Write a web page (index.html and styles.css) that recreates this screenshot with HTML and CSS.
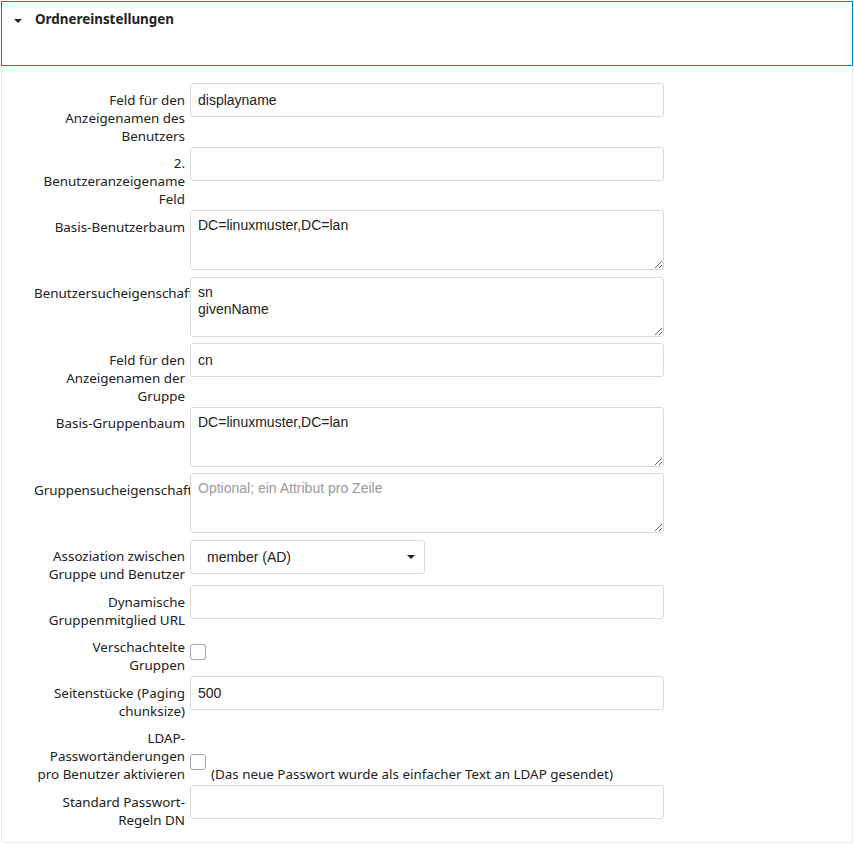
FILE: index.html
```html
<!DOCTYPE html>
<html lang="de">
<head>
<meta charset="utf-8">
<title>Ordnereinstellungen</title>
<link rel="stylesheet" href="styles.css">
</head>
<body>
<div class="wrap">
  <div class="section-head">
    <span class="caret"></span>
    <h3 class="title">Ordnereinstellungen</h3>
  </div>
  <div class="section-body">
    <div class="row">
      <label class="lbl">Feld für den Anzeigenamen des Benutzers</label>
      <input class="field" type="text" value="displayname">
    </div>
    <div class="row">
      <label class="lbl">2. Benutzeranzeigename Feld</label>
      <input class="field" type="text" value="">
    </div>
    <div class="row">
      <label class="lbl">Basis-Benutzerbaum</label>
      <textarea class="field area">DC=linuxmuster,DC=lan</textarea>
    </div>
    <div class="row">
      <label class="lbl">Benutzersucheigenschaften</label>
      <textarea class="field area">sn
givenName</textarea>
    </div>
    <div class="row">
      <label class="lbl">Feld für den Anzeigenamen der Gruppe</label>
      <input class="field" type="text" value="cn">
    </div>
    <div class="row">
      <label class="lbl">Basis-Gruppenbaum</label>
      <textarea class="field area">DC=linuxmuster,DC=lan</textarea>
    </div>
    <div class="row">
      <label class="lbl">Gruppensucheigenschaften</label>
      <textarea class="field area" placeholder="Optional; ein Attribut pro Zeile"></textarea>
    </div>
    <div class="row">
      <label class="lbl">Assoziation zwischen Gruppe und Benutzer</label>
      <div class="select"><span>member (AD)</span><span class="sel-caret"></span></div>
    </div>
    <div class="row">
      <label class="lbl">Dynamische Gruppenmitglied URL</label>
      <input class="field" type="text" value="">
    </div>
    <div class="row">
      <label class="lbl">Verschachtelte Gruppen</label>
      <span class="check check-a"></span>
    </div>
    <div class="row">
      <label class="lbl">Seitenstücke (Paging chunksize)</label>
      <input class="field" type="text" value="500">
    </div>
    <div class="row">
      <label class="lbl">LDAP-Passwortänderungen pro Benutzer aktivieren</label>
      <span class="check check-b"></span>
      <span class="note">(Das neue Passwort wurde als einfacher Text an LDAP gesendet)</span>
    </div>
    <div class="row last">
      <label class="lbl">Standard Passwort-Regeln DN</label>
      <input class="field" type="text" value="">
    </div>
  </div>
</div>
</body>
</html>
```

FILE: styles.css
```css
html, body {
  margin: 0;
  padding: 0;
  background: #fff;
}

.wrap {
  padding: 1px 1px 0 1px;
  width: 852px;
  font-family: "Noto Sans", "DejaVu Sans", sans-serif;
  color: #222;
}

.section-head {
  border: 1px solid #0082c9;
  height: 63px;
  display: flex;
  align-items: flex-start;
}

.caret {
  width: 0;
  height: 0;
  border-left: 4px solid transparent;
  border-right: 4px solid transparent;
  border-top: 4px solid #222;
  margin: 17px 0 0 12px;
}

.title {
  margin: 8px 0 0 13px;
  font-size: 13.4px;
  line-height: 18px;
  font-weight: bold;
}

.section-body {
  border: 1px solid #ebebeb;
  border-top: none;
  padding: 17px 0 13px 32px;
  border-radius: 0 0 3px 3px;
}

.row {
  display: flex;
  align-items: flex-start;
  margin-bottom: 2px;
}

.row.last {
  margin-bottom: 0;
}

.lbl {
  flex: none;
  width: 151px;
  margin-right: 5px;
  padding-top: 7.5px;
  text-align: right;
  font-size: 13.4px;
  line-height: 18px;
  color: #222;
}

.field {
  flex: none;
  box-sizing: border-box;
  width: 474px;
  height: 34px;
  margin: 0;
  padding: 0 7px;
  border: 1px solid #dbdbdb;
  border-radius: 3px;
  background: #fff;
  font-family: "Liberation Sans", Arial, sans-serif;
  font-size: 14px;
  color: #222;
  outline: none;
}

.area {
  height: 60px;
  margin-bottom: 4.5px;
  padding: 6px 7px;
  line-height: 17px;
  resize: vertical;
}

.area::placeholder {
  color: #9a9a9a;
}

.select {
  flex: none;
  box-sizing: border-box;
  width: 235px;
  height: 34px;
  border: 1px solid #dbdbdb;
  border-radius: 3px;
  display: flex;
  align-items: center;
  justify-content: space-between;
  padding: 0 9px 0 16px;
  font-family: "Liberation Sans", Arial, sans-serif;
  font-size: 14px;
  color: #222;
}

.sel-caret {
  width: 0;
  height: 0;
  border-left: 4px solid transparent;
  border-right: 4px solid transparent;
  border-top: 4px solid #222;
}

.check {
  flex: none;
  box-sizing: border-box;
  width: 16px;
  height: 16px;
  border: 1px solid #a6a6a6;
  border-radius: 3px;
  background: #fff;
}

.check-a {
  margin-top: 13.5px;
}

.check-b {
  margin-top: 32px;
}

.note {
  margin-left: 5px;
  padding-top: 43.5px;
  font-size: 13.4px;
  line-height: 18px;
  white-space: nowrap;
}
```
